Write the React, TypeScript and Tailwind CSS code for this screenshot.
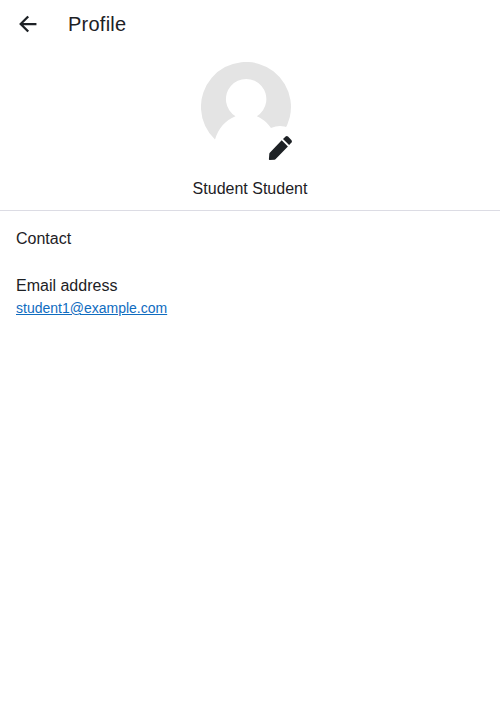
const fontStack = "font-['Liberation_Sans',Arial,sans-serif]";

function BackArrow() {
  return (
    <svg viewBox="0 0 512 512" className="size-6" fill="none" stroke="currentColor" strokeWidth="48">
      <path d="M244 400 100 256l144-144M120 256h292" strokeLinecap="square" strokeMiterlimit="10" />
    </svg>
  );
}

function Avatar() {
  return (
    <svg viewBox="0 0 90 90" className="size-[90px]">
      <path
        d="M14 77.6A45 45 0 1 1 82 70.5L70 66C66 60.5 62 57 55.8 54.3A20.2 20.2 0 1 0 34.5 54.3C24.500 58 17 67 14 77.600Z"
        fill="#e4e4e4"
      />
    </svg>
  );
}

function Pencil() {
  return (
    <svg viewBox="0 0 24 24" className="size-6" fill="currentColor">
      <path d="M13.7 4.2 19.9 10.400 7.700 23.100Q7.200 23.600 6.500 23.700L1.600 24Q.9 24 .9 23.300L1.300 18Q1.300 17.300 1.800 16.700Z" />
      <path d="M15 3 17.600.6Q18.800-.4 20 .6L23.300 3.900Q24.500 5.200 23.500 6.500L21.100 9.100Z" />
    </svg>
  );
}

export default function App() {
  return (
    <div className={`min-h-[720px] bg-white text-[#1d2125] ${fontStack}`}>
      <header className="flex h-12 items-center pl-4">
        <button aria-label="Back" className="flex size-6 items-center justify-center">
          <BackArrow />
        </button>
        <h1 className="ml-7 text-xl leading-6 tracking-[0.24px]">Profile</h1>
      </header>
      <section className="flex h-[163px] flex-col items-center border-b border-[#dcdce4] pt-3.5">
        <div className="relative mr-2 h-[90px] w-[90px]">
          <Avatar />
          <button
            aria-label="Edit picture"
            className="absolute top-16 left-[57px] flex size-11 items-center justify-center rounded-full bg-white"
          >
            <Pencil />
          </button>
        </div>
        <h2 className="mt-[25px] text-base leading-6">Student Student</h2>
      </section>
      <main className="px-4 pt-4">
        <h3 className="text-base leading-6">Contact</h3>
        <dl className="mt-6">
          <dt className="text-base leading-[22px]">Email address</dt>
          <dd className="text-sm leading-[22px]">
            <a href="mailto:student1@example.com" className="text-[#0f6cbf] underline">
              student1@example.com
            </a>
          </dd>
        </dl>
      </main>
    </div>
  );
}
